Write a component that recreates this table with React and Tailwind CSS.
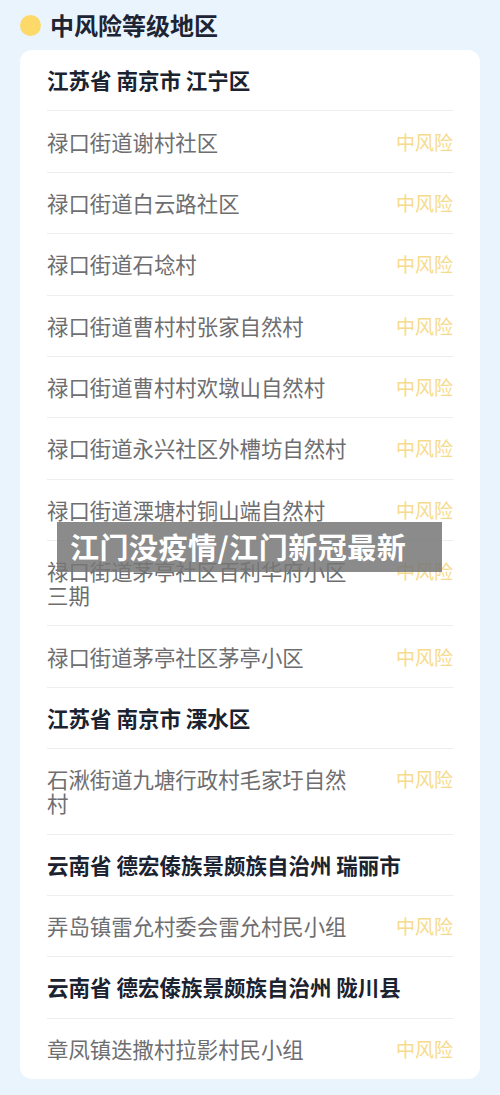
import React from 'react';

const groups = [
  {
    title: '江苏省 南京市 江宁区',
    items: [
      '禄口街道谢村社区',
      '禄口街道白云路社区',
      '禄口街道石埝村',
      '禄口街道曹村村张家自然村',
      '禄口街道曹村村欢墩山自然村',
      '禄口街道永兴社区外槽坊自然村',
      '禄口街道溧塘村铜山端自然村',
      '禄口街道茅亭社区百利华府小区三期',
      '禄口街道茅亭社区茅亭小区',
    ],
  },
  { title: '江苏省 南京市 溧水区', items: ['石湫街道九塘行政村毛家圩自然村'] },
  { title: '云南省 德宏傣族景颇族自治州 瑞丽市', items: ['弄岛镇雷允村委会雷允村民小组'] },
  { title: '云南省 德宏傣族景颇族自治州 陇川县', items: ['章凤镇迭撒村拉影村民小组'] },
];

const font = { fontFamily: '"Noto Sans CJK SC", "Noto Sans", sans-serif' };

const Row = ({ children, last }) => (
  <div className={`flex items-start justify-between py-[18.2px] ${last ? '' : 'border-b border-[#eceef1]'}`}>
    {children}
  </div>
);

export default function App() {
  const rows = [];
  groups.forEach((g, gi) => {
    rows.push({ type: 'head', text: g.title, key: `h${gi}` });
    g.items.forEach((t, i) => rows.push({ type: 'item', text: t, key: `i${gi}-${i}` }));
  });

  return (
    <div className="relative w-[500px] min-h-[1095px] bg-[#eaf4fd] pt-[10px]" style={font}>
      <div className="flex items-center h-[30px] pl-[20px]">
        <span className="w-[21px] h-[21px] rounded-full bg-[#fcd969] shrink-0" />
        <h1 className="ml-[9px] text-[24px] leading-[30px] font-bold text-[#1d2433]">中风险等级地区</h1>
      </div>

      <div className="mx-[20px] mt-[10px] bg-white rounded-[12px] px-[27px]">
        {rows.map((r, idx) => (
          <Row key={r.key} last={idx === rows.length - 1}>
            {r.type === 'head' ? (
              <span className="text-[21.5px] leading-[24px] font-bold text-[#1b2230]">{r.text}</span>
            ) : (
              <>
                <span className="w-[308px] text-[21.4px] leading-[24px] text-[#6e6e70]">{r.text}</span>
                <span className="text-[19px] leading-[24px] text-[#f7db8c]">中风险</span>
              </>
            )}
          </Row>
        ))}
      </div>

      <div className="absolute left-[57px] top-[522px] w-[385px] h-[50px] bg-[#777777]/85 flex items-center pl-[13px]">
        <span className="text-[29px] font-bold text-white tracking-[0.5px]">江门没疫情/江门新冠最新</span>
      </div>
    </div>
  );
}
